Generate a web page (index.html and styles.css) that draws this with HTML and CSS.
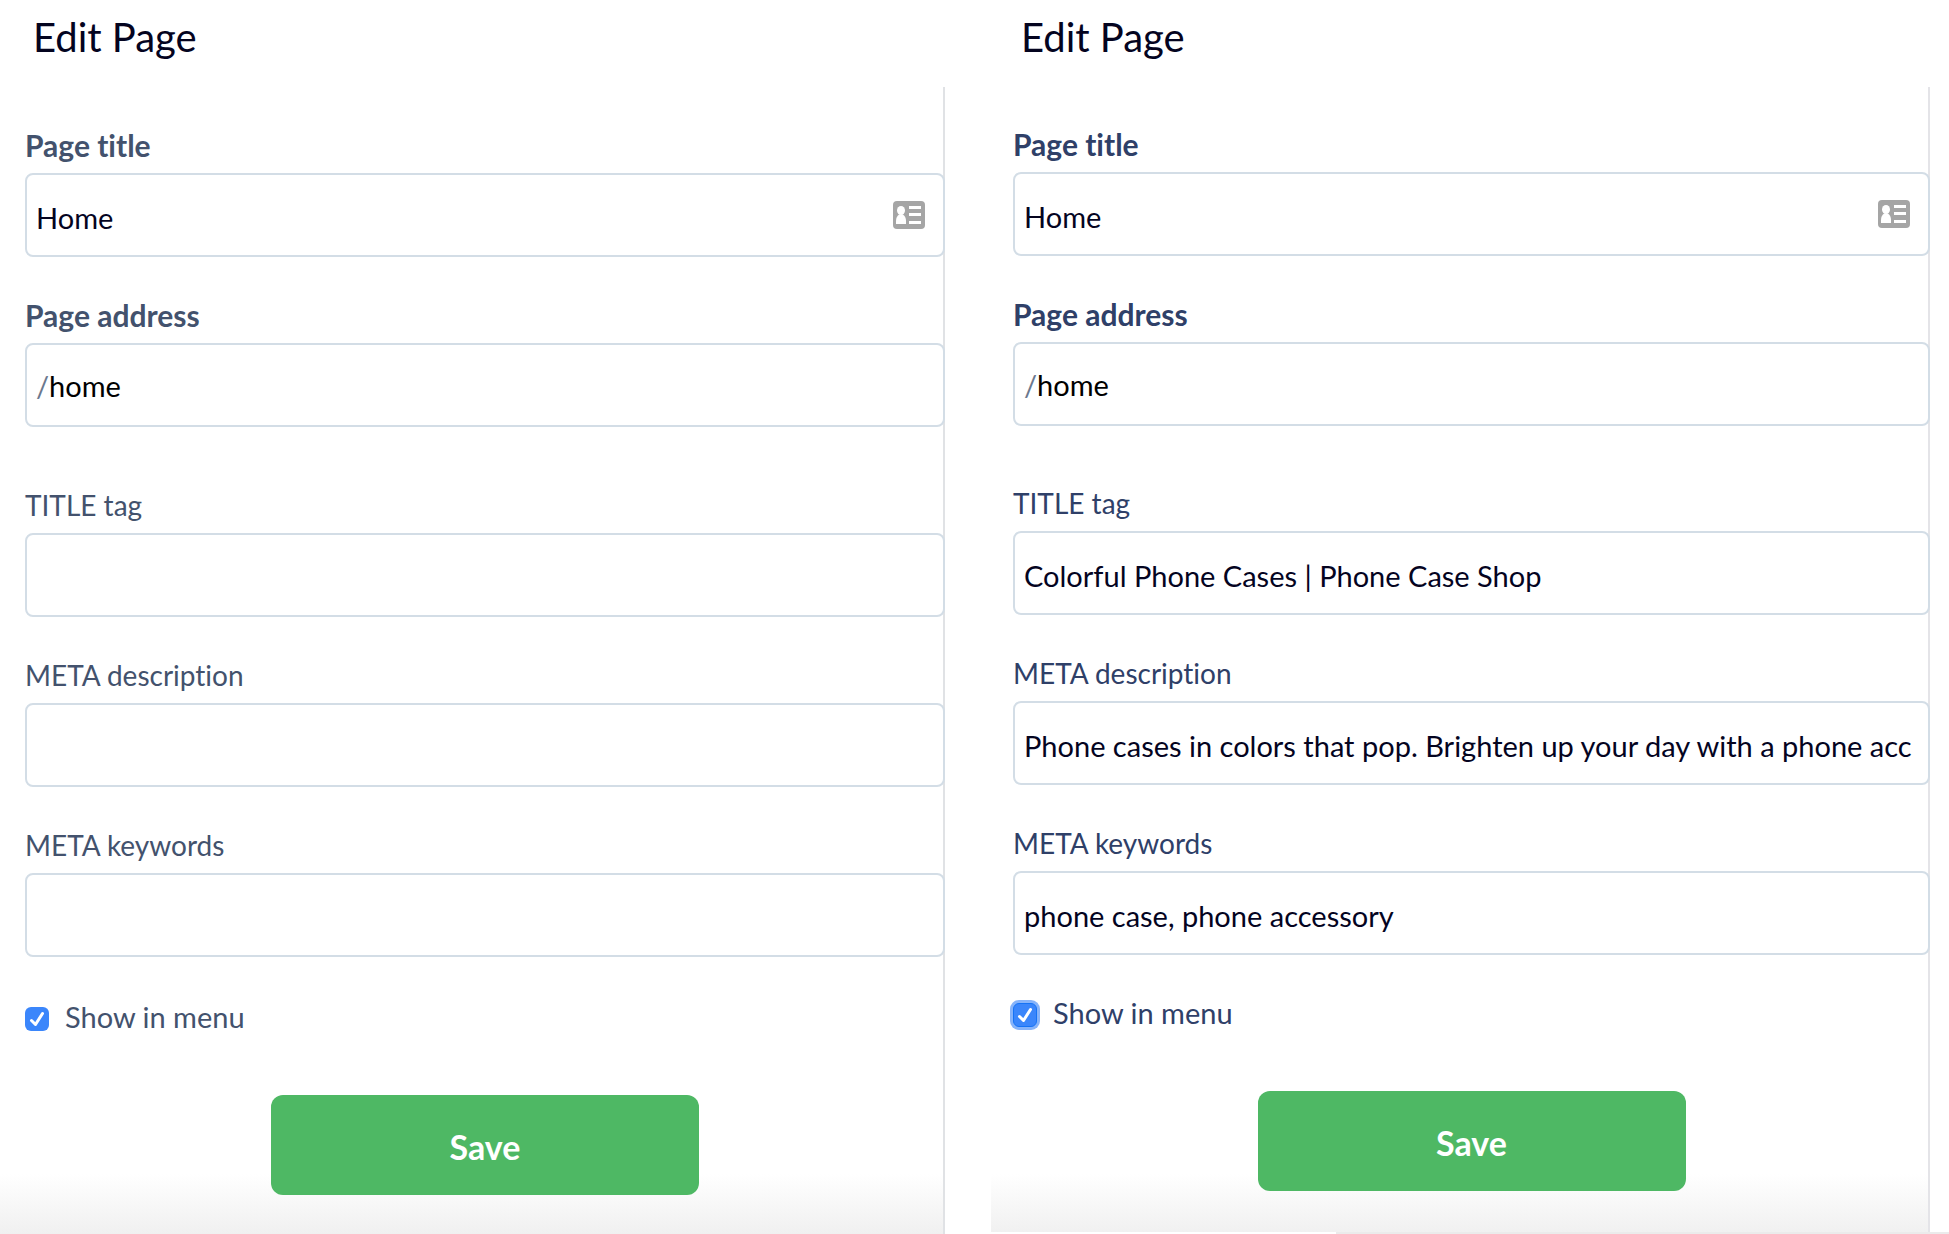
FILE: index.html
```html
<!DOCTYPE html>
<html lang="en">
<head>
  <meta charset="utf-8">
  <title>Edit Page</title>
  <link rel="stylesheet" href="styles.css">
</head>
<body>
  <div class="compare">
    <section class="panel">
      <h1>Edit Page</h1>
      <form class="form">
        <div class="field">
          <label class="strong" for="title1">Page title</label>
          <div class="box">
            <input type="text" id="title1" value="Home">
            <svg class="card-icon" viewBox="0 0 32 28" aria-hidden="true">
              <rect width="32" height="28" rx="4" fill="#a5a5a5"/>
              <ellipse cx="8" cy="9.500" rx="4" ry="4.500" fill="#fff"/>
              <path d="M3 23v-3c0-3 1-5 3-6.500h4c2 1.500 3 3.500 3 6.500v3z" fill="#fff"/>
              <path d="M16 5h12v3H16zM16 12h12v3H16zM16 20h12v3H16z" fill="#fff"/>
            </svg>
          </div>
        </div>
        <div class="field">
          <label class="strong" for="address1">Page address</label>
          <div class="box address">
            <span class="slash">/</span>
            <input type="text" id="address1" value="home">
          </div>
        </div>
        <div class="field seo">
          <label for="tag1">TITLE tag</label>
          <div class="box"><input type="text" id="tag1"></div>
        </div>
        <div class="field">
          <label for="desc1">META description</label>
          <div class="box"><input type="text" id="desc1"></div>
        </div>
        <div class="field">
          <label for="keywords1">META keywords</label>
          <div class="box"><input type="text" id="keywords1"></div>
        </div>
        <label class="check">
          <span class="tick">
            <input type="checkbox" checked>
            <svg viewBox="0 0 24 24" aria-hidden="true"><path d="M6.500 13.500l4 4L17.500 6.500"/></svg>
          </span>
          Show in menu
        </label>
        <button class="save" type="button">Save</button>
      </form>
    </section>

    <section class="panel filled">
      <h1>Edit Page</h1>
      <form class="form">
        <div class="field">
          <label class="strong" for="title2">Page title</label>
          <div class="box">
            <input type="text" id="title2" value="Home">
            <svg class="card-icon" viewBox="0 0 32 28" aria-hidden="true">
              <rect width="32" height="28" rx="4" fill="#a5a5a5"/>
              <ellipse cx="8" cy="9.500" rx="4" ry="4.500" fill="#fff"/>
              <path d="M3 23v-3c0-3 1-5 3-6.500h4c2 1.500 3 3.500 3 6.500v3z" fill="#fff"/>
              <path d="M16 5h12v3H16zM16 12h12v3H16zM16 20h12v3H16z" fill="#fff"/>
            </svg>
          </div>
        </div>
        <div class="field">
          <label class="strong" for="address2">Page address</label>
          <div class="box address">
            <span class="slash">/</span>
            <input type="text" id="address2" value="home">
          </div>
        </div>
        <div class="field seo">
          <label for="tag2">TITLE tag</label>
          <div class="box"><input type="text" id="tag2" value="Colorful Phone Cases | Phone Case Shop"></div>
        </div>
        <div class="field">
          <label for="desc2">META description</label>
          <div class="box"><input type="text" id="desc2" value="Phone cases in colors that pop. Brighten up your day with a phone acc"></div>
        </div>
        <div class="field">
          <label for="keywords2">META keywords</label>
          <div class="box"><input type="text" id="keywords2" value="phone case, phone accessory"></div>
        </div>
        <label class="check">
          <span class="tick">
            <input type="checkbox" checked>
            <svg viewBox="0 0 24 24" aria-hidden="true"><path d="M6.500 13.500l4 4L17.500 6.500"/></svg>
          </span>
          Show in menu
        </label>
        <button class="save" type="button">Save</button>
      </form>
    </section>
  </div>
</body>
</html>
```
FILE: styles.css
```css
* { box-sizing: border-box; }
body { margin: 0; background: #fff; font-family: Lato, "Open Sans", sans-serif; font-size: 28px; font-variant-ligatures: none; color: #43526d; overflow-x: hidden; }

.compare { display: grid; grid-template-columns: 945fr 939fr; gap: 46px; padding-right: 19px; min-height: 100vh; }
.panel { display: flex; flex-direction: column; min-width: 0; background: linear-gradient(to top, #f0f0f0, #fff 60px); }
h1 { margin: 0; height: 87px; padding: 14px 0 0 33px; font-size: 40px; line-height: 46px; font-weight: 400; color: #04041f; }

.form { flex: 1; display: flex; flex-direction: column; padding: 40px 0 36px 25px; border-right: 2px solid #e0e2e5; }
.field { margin-bottom: 40px; }
.field.seo { margin-top: 20px; }
.field label { display: block; height: 46px; line-height: 36px; }
.field label.strong { font-size: 30px; font-weight: 700; }

.box { display: flex; align-items: center; height: 84px; margin-right: -2px; padding: 0 9px; background: #fff; border: 2px solid #d3dde6; border-radius: 8px; font-size: 29px; }
.box input { flex: 1; min-width: 0; height: 100%; padding: 4px 0 0; border: 0; outline: 0; background: none; font: inherit; color: #04041f; }
.box.address input { padding: 0; color: #000; }
.slash { color: #6b788e; }
.card-icon { width: 32px; height: 28px; margin-right: 9px; }

.check { display: flex; align-items: flex-end; gap: 16px; margin-top: 6px; font-size: 29px; line-height: 28px; }
.tick { position: relative; width: 24px; height: 24px; }
.tick input { appearance: none; display: block; width: 24px; height: 24px; margin: 0; background: #3b86fb; border-radius: 6px; }
.tick svg { position: absolute; inset: 0; fill: none; stroke: #fff; stroke-width: 3; stroke-linecap: round; stroke-linejoin: round; pointer-events: none; }

.save { align-self: center; width: 428px; max-width: 100%; height: 100px; margin: 64px -2px 0 0; padding: 4px 0 0; border: 0; border-radius: 12px; background: #4eb864; color: #fff; font: 700 34px/40px Lato, "Open Sans", sans-serif; }

.filled::after { content: ""; height: 2px; margin-right: -19px; background: linear-gradient(to right, #fff 36%, #ebebeb 36%); }
.filled h1 { padding-left: 30px; }
.filled .form { padding: 39px 0 36px 22px; border-right-color: #e4e4e8; }
.filled .field.seo { margin-top: 19px; }
.filled .check { margin-top: 4px; color: #2f4068; }
.filled .field label { color: #2f4068; }
.filled .tick input { border: 1px solid #1673f5; box-shadow: 0 0 0 3px #86b3fa; }
```
